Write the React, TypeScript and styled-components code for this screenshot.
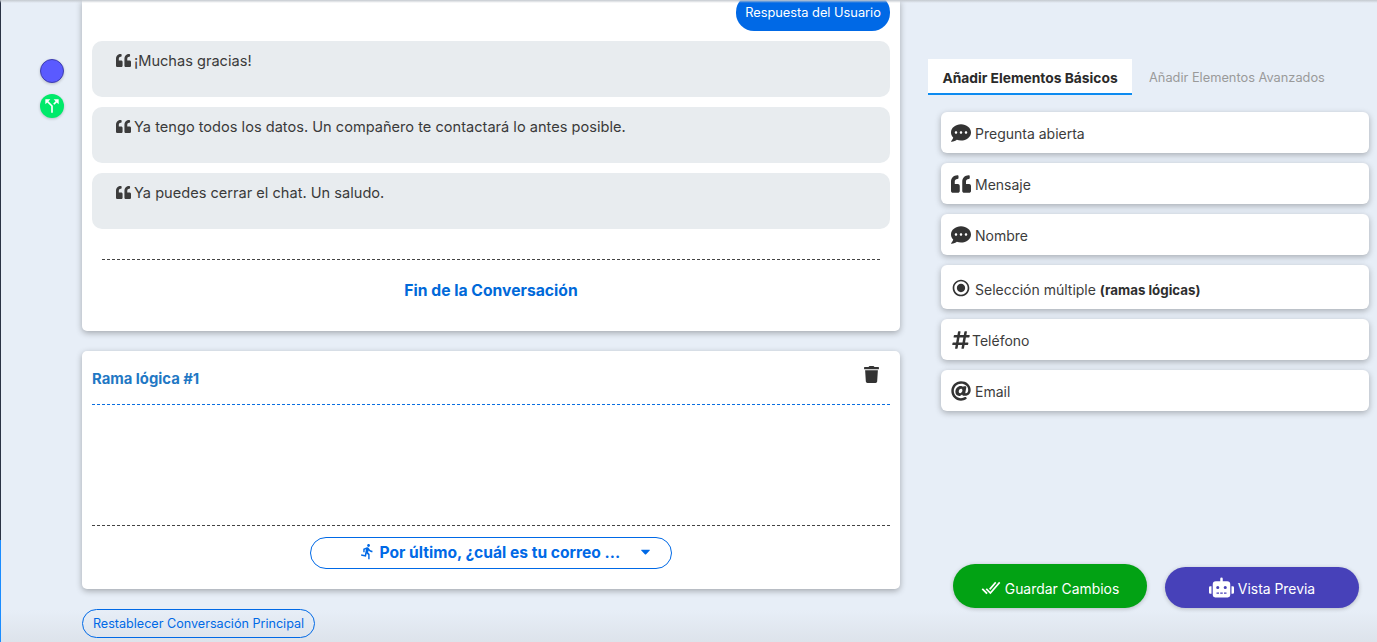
import * as React from "react";
import styled, { createGlobalStyle } from "styled-components";
import {
  FaAt,
  FaCaretDown,
  FaCommentDots,
  FaHashtag,
  FaQuoteLeft,
  FaRobot,
  FaTrash,
} from "react-icons/fa";
import { IoCheckmarkDoneSharp } from "react-icons/io5";
import { MdCallSplit, MdDirectionsRun, MdRadioButtonChecked } from "react-icons/md";

const FONT = `"Inter", "Open Sans", "Liberation Sans", sans-serif`;

const GlobalStyle = createGlobalStyle`
  html, body {
    margin: 0;
    padding: 0;
    height: 100%;
    overflow: hidden;
  }
  body {
    font-family: ${FONT};
    color: #333;
    background: #e8eff8;
  }
`;

const Page = styled.div`
  position: relative;
  width: 1377px;
  height: 642px;
  overflow: hidden;
  display: flex;
  background: linear-gradient(to bottom, #e7eef7 0, #e7eef7 610px, #dde3eb 642px);
  &::before {
    content: "";
    position: absolute;
    top: 0;
    left: 0;
    right: 0;
    height: 3px;
    background: linear-gradient(to bottom, #c4c9cf, rgba(230, 235, 240, 0));
    z-index: 2;
  }
`;

const EdgeLine = styled.div`
  width: 1px;
  flex: none;
  background: linear-gradient(to bottom, #2b3345 0, #2b3345 540px, #1a8cff 540px, #1a8cff 100%);
`;

const Rail = styled.div`
  width: 81px;
  flex: none;
  padding: 59px 0 0 39px;
  box-sizing: border-box;
  display: flex;
  flex-direction: column;
  gap: 11px;
`;

const Dot = styled.div<{ $color: string; $ring?: string }>`
  width: 24px;
  height: 24px;
  box-sizing: border-box;
  border-radius: 50%;
  background: ${(p) => p.$color};
  border: ${(p) => (p.$ring ? `1.5px solid ${p.$ring}` : "none")};
  color: #fff;
  display: flex;
  align-items: center;
  justify-content: center;
  font-size: 20px;
  box-shadow: 0 1px 3px rgba(0, 0, 0, 0.2);
`;

const Main = styled.div`
  width: 818px;
  flex: none;
  display: flex;
  flex-direction: column;
`;

const Card = styled.section`
  background: #fff;
  border-radius: 0 0 5px 5px;
  box-shadow: 0 2px 6px rgba(0, 0, 0, 0.3);
  box-sizing: border-box;
  padding: 0 10px;
`;

const ChatCard = styled(Card)`
  height: 331px;
  display: flex;
  flex-direction: column;
`;

const UserBubble = styled.div`
  align-self: flex-end;
  width: 154px;
  height: 37px;
  margin-top: -6px;
  margin-bottom: 10px;
  background: #0069e6;
  color: #fff;
  font-size: 12.8px;
  border-radius: 18px;
  display: flex;
  align-items: center;
  justify-content: center;
`;

const MessageList = styled.div`
  display: flex;
  flex-direction: column;
  gap: 10px;
`;

const Message = styled.div`
  height: 56px;
  box-sizing: border-box;
  padding: 12px 24px;
  background: #e8ecef;
  border-radius: 10px;
  display: flex;
  align-items: flex-start;
  gap: 3px;
  font-size: 14.6px;
  line-height: 17px;
  color: #3a3a3a;
  svg {
    font-size: 15px;
    color: #3c3c3c;
    flex: none;
  }
`;

const EndLine = styled.div`
  margin: 30px 10px 0;
  border-top: 1px dashed #444;
`;

const EndTitle = styled.div`
  margin-top: 21px;
  text-align: center;
  color: #0069d9;
  font-size: 15.7px;
  font-weight: 700;
  line-height: 20px;
`;

const BranchCard = styled(Card)`
  margin-top: 20px;
  height: 238px;
  border-radius: 5px;
  display: flex;
  flex-direction: column;
`;

const BranchHeader = styled.div`
  height: 53px;
  display: flex;
  align-items: center;
  justify-content: space-between;
  padding-right: 10px;
  border-bottom: 1px dashed #0a6fe0;
`;

const BranchTitle = styled.h3`
  margin: 2px 0 0;
  font-size: 14.8px;
  font-weight: 700;
  color: #1f78c4;
`;

const TrashButton = styled.div`
  font-size: 17px;
  color: #333;
  display: flex;
  margin-top: -6px;
`;

const BranchBody = styled.div`
  height: 120px;
  border-bottom: 1px dashed #444;
`;

const BranchFooter = styled.div`
  display: flex;
  justify-content: center;
  padding-top: 11px;
`;

const SelectPill = styled.div`
  width: 362px;
  height: 32px;
  box-sizing: border-box;
  margin-left: -1px;
  border: 1px solid #0069e6;
  border-radius: 16px;
  color: #0069e6;
  display: flex;
  align-items: center;
  padding: 0 0 2px 48px;
  font-size: 15.6px;
  font-weight: 700;
  white-space: nowrap;
  svg:first-child {
    font-size: 17px;
    margin-right: 4px;
    margin-top: -1px;
  }
  svg:last-child {
    font-size: 15px;
    margin-left: auto;
    margin-right: 18px;
    margin-top: -1px;
  }
`;

const ResetButton = styled.button`
  align-self: flex-start;
  margin-top: 20px;
  width: 233px;
  height: 29px;
  padding: 0;
  border: 1px solid #0069e6;
  border-radius: 15px;
  background: transparent;
  color: #0069e6;
  font-family: ${FONT};
  font-size: 12.6px;
  white-space: nowrap;
`;

const Side = styled.aside`
  margin-left: 28px;
  width: 441px;
  flex: none;
  padding-top: 59px;
  box-sizing: border-box;
  display: flex;
  flex-direction: column;
`;

const Tabs = styled.div`
  display: flex;
  align-items: flex-start;
`;

const Tab = styled.div<{ $active?: boolean }>`
  width: ${(p) => (p.$active ? "204px" : "auto")};
  height: 36px;
  box-sizing: border-box;
  margin-left: ${(p) => (p.$active ? "0" : "17px")};
  display: flex;
  align-items: center;
  justify-content: center;
  padding-top: ${(p) => (p.$active ? "3px" : "0")};
  font-size: ${(p) => (p.$active ? "13.8px" : "12.8px")};
  font-weight: ${(p) => (p.$active ? 700 : 400)};
  color: ${(p) => (p.$active ? "#2a2a2a" : "#9a9a9a")};
  background: ${(p) => (p.$active ? "#fff" : "transparent")};
  border-bottom: ${(p) => (p.$active ? "2px solid #0d8bf0" : "none")};
`;

const ElementList = styled.div`
  margin: 17px 0 0 13px;
  width: 428px;
  display: flex;
  flex-direction: column;
  gap: 10px;
`;

const ElementRow = styled.div<{ $tall?: boolean; $gap?: number }>`
  height: ${(p) => (p.$tall ? "44px" : "41px")};
  box-sizing: border-box;
  padding: ${(p) => (p.$tall ? "4px" : "2px")} 0 0 10px;
  background: #fff;
  border-radius: 6px;
  box-shadow: 0 2px 6px rgba(0, 0, 0, 0.28);
  display: flex;
  align-items: center;
  gap: ${(p) => p.$gap ?? 4}px;
  font-size: 14px;
  color: #3c3c3c;
  svg {
    font-size: 20px;
    color: #333;
    flex: none;
    margin-top: -2px;
  }
  b {
    font-size: 13.3px;
    color: #2e2e2e;
  }
`;

const Actions = styled.div`
  margin-top: auto;
  margin-bottom: 34px;
  padding-left: 25px;
  display: flex;
  align-items: flex-end;
  gap: 18px;
`;

const ActionButton = styled.button<{ $color: string; $tall?: boolean; $iconSize: number }>`
  width: 194px;
  height: ${(p) => (p.$tall ? "44px" : "41px")};
  border: none;
  border-radius: 22px;
  background: ${(p) => p.$color};
  color: #fff;
  font-family: ${FONT};
  font-size: 13.9px;
  display: flex;
  align-items: center;
  justify-content: center;
  gap: 4px;
  padding: ${(p) => (p.$tall ? "6px" : "3px")} 0 0;
  box-shadow: 0 1px 4px rgba(0, 0, 0, 0.22);
  svg {
    font-size: ${(p) => p.$iconSize}px;
    margin-top: -3px;
  }
`;

const messages = [
  "¡Muchas gracias!",
  "Ya tengo todos los datos. Un compañero te contactará lo antes posible.",
  "Ya puedes cerrar el chat. Un saludo.",
];

const App: React.FC = () => {
  return (
    <Page>
      <GlobalStyle />
      <EdgeLine />
      <Rail>
        <Dot $color="#5a5aff" $ring="#3d3db0" />
        <Dot $color="#00ea6a">
          <MdCallSplit />
        </Dot>
      </Rail>
      <Main>
        <ChatCard>
          <UserBubble>Respuesta del Usuario</UserBubble>
          <MessageList>
            {messages.map((text) => (
              <Message key={text}>
                <FaQuoteLeft />
                <span>{text}</span>
              </Message>
            ))}
          </MessageList>
          <EndLine />
          <EndTitle>Fin de la Conversación</EndTitle>
        </ChatCard>
        <BranchCard>
          <BranchHeader>
            <BranchTitle>Rama lógica #1</BranchTitle>
            <TrashButton>
              <FaTrash />
            </TrashButton>
          </BranchHeader>
          <BranchBody />
          <BranchFooter>
            <SelectPill>
              <MdDirectionsRun />
              <span>Por último, ¿cuál es tu correo ...</span>
              <FaCaretDown />
            </SelectPill>
          </BranchFooter>
        </BranchCard>
        <ResetButton>Restablecer Conversación Principal</ResetButton>
      </Main>
      <Side>
        <Tabs>
          <Tab $active>Añadir Elementos Básicos</Tab>
          <Tab>Añadir Elementos Avanzados</Tab>
        </Tabs>
        <ElementList>
          <ElementRow>
            <FaCommentDots />
            Pregunta abierta
          </ElementRow>
          <ElementRow>
            <FaQuoteLeft />
            Mensaje
          </ElementRow>
          <ElementRow>
            <FaCommentDots />
            Nombre
          </ElementRow>
          <ElementRow $tall>
            <MdRadioButtonChecked />
            <span>
              Selección múltiple <b>(ramas lógicas)</b>
            </span>
          </ElementRow>
          <ElementRow $gap={1}>
            <FaHashtag />
            Teléfono
          </ElementRow>
          <ElementRow>
            <FaAt />
            Email
          </ElementRow>
        </ElementList>
        <Actions>
          <ActionButton $color="#02a214" $tall $iconSize={20}>
            <IoCheckmarkDoneSharp />
            Guardar Cambios
          </ActionButton>
          <ActionButton $color="#4741b9" $iconSize={25}>
            <FaRobot />
            Vista Previa
          </ActionButton>
        </Actions>
      </Side>
    </Page>
  );
};

export default App;
